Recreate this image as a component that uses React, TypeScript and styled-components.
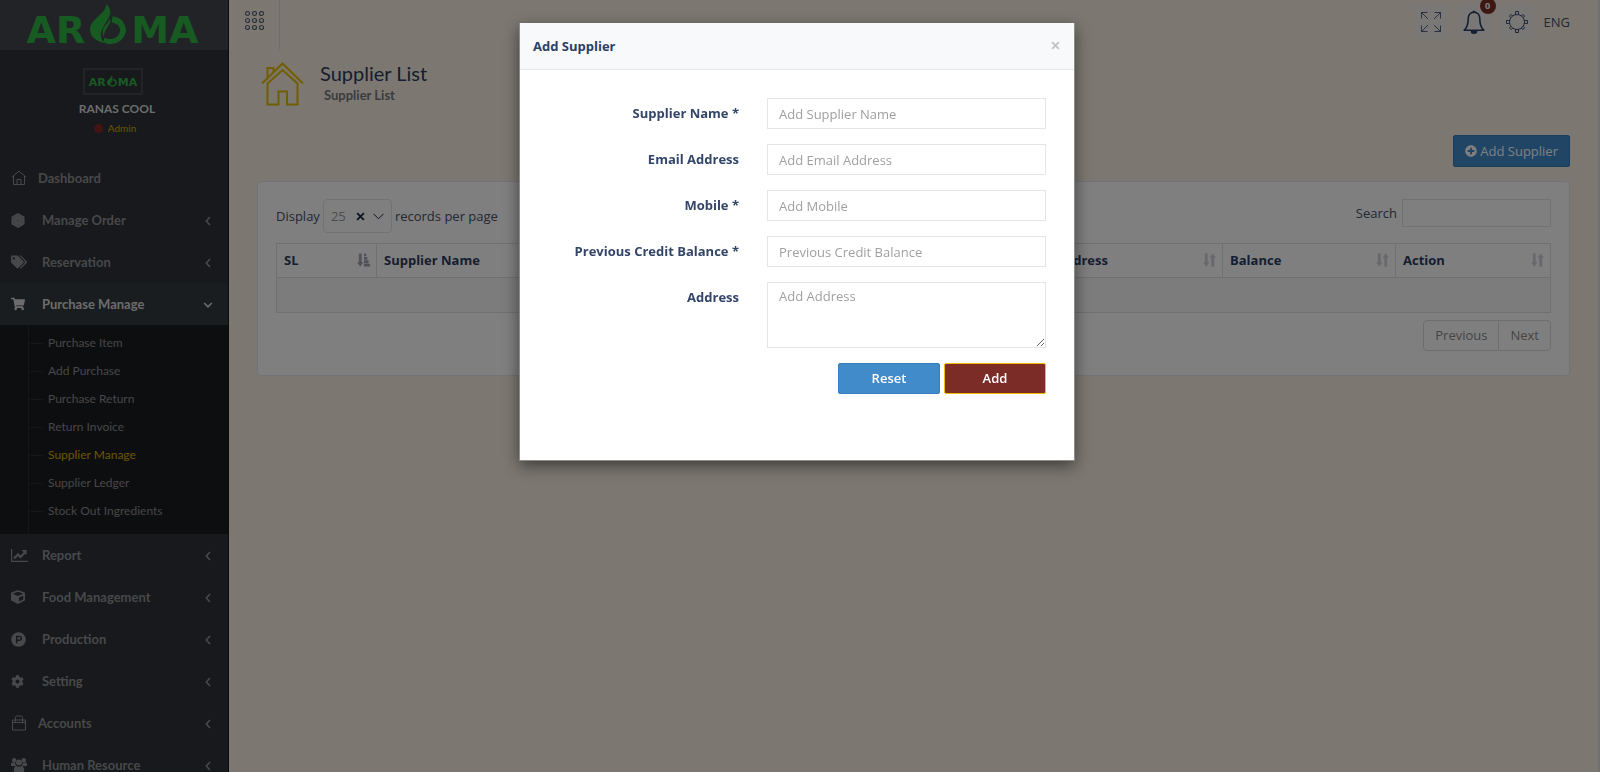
import React from "react";
import styled, { createGlobalStyle } from "styled-components";
import { FaTags, FaShoppingCart, FaCube, FaProductHunt, FaCog, FaPlusCircle } from "react-icons/fa";

const GlobalStyle = createGlobalStyle`
  *, *::before, *::after { box-sizing: border-box; }
  body {
    margin: 0;
    background: #f9f0e2;
    color: #444f68;
    font-family: "Open Sans", "Noto Sans", sans-serif;
    font-size: 13px;
    line-height: 20px;
  }
  button, input, textarea, select { font: inherit; }
  svg { display: block; flex: none; }
`;

const menuFont = `Lato, "Open Sans", sans-serif`;

const Page = styled.div`
  display: flex;
  height: 100vh;
  overflow: hidden;
`;

const Sidebar = styled.aside`
  flex: none;
  width: 229px;
  overflow: hidden;
  background: #2f3238;
  border-right: 1px solid #14161a;
  font-family: ${menuFont};
`;

const LogoBar = styled.div`
  display: flex;
  justify-content: center;
  height: 50px;
  padding: 3px 3px 0 0;
  background: #42474f;
`;

const Logo = styled.div<{ $size: number }>`
  display: flex;
  align-items: flex-end;
  gap: ${(p) => (p.$size > 20 ? 5 : 1)}px;
  height: ${(p) => Math.round(p.$size * 1.08)}px;
  color: #2fb544;
  font-family: "DejaVu Sans", sans-serif;
  font-weight: 700;
  font-size: ${(p) => p.$size}px;
  line-height: 0.72;
`;

const Profile = styled.div`
  display: flex;
  flex-direction: column;
  align-items: center;
  height: 107px;
  padding: 18px 2px 0 0;
`;

const Avatar = styled.div`
  display: flex;
  justify-content: center;
  width: 60px;
  height: 27px;
  padding-top: 5px;
  border: 2px solid #44474d;
`;

const UserName = styled.strong`
  margin-top: 4px;
  padding-left: 8px;
  color: #d8d8d8;
  font-size: 12px;
  line-height: 20px;
`;

const Role = styled.span`
  display: flex;
  align-items: center;
  gap: 5px;
  padding-left: 4px;
  color: #d6ab00;
  font-size: 10px;
  line-height: 18px;
`;

const Dot = styled.i`
  width: 9px;
  height: 9px;
  border-radius: 50%;
  background: #842b28;
`;

const MenuLink = styled.a<{ $active?: boolean; $narrow?: boolean }>`
  display: flex;
  align-items: center;
  gap: ${(p) => (p.$narrow ? 11 : 15)}px;
  height: 42px;
  padding: 0 15px 0 11px;
  background: ${(p) => (p.$active ? "#343b40" : "transparent")};
  color: ${(p) => (p.$active ? "#d8d8d8" : "#8e9194")};
  font-size: 13px;
  font-weight: 700;
  text-decoration: none;
`;

const MenuIcon = styled.span`
  display: flex;
  flex: none;
  width: 16px;
`;

const MenuLabel = styled.span`
  flex: 1;
`;

const SubMenu = styled.ul`
  margin: 0;
  padding: 4px 0 9px 28px;
  list-style: none;
  background: linear-gradient(#2c2e32, #2c2e32) 28px 0 / 1px 100% no-repeat #1b1d20;
`;

const SubLink = styled.a<{ $active?: boolean }>`
  display: flex;
  align-items: center;
  gap: 5px;
  height: 28px;
  padding-left: 2px;
  color: ${(p) => (p.$active ? "#d6ab00" : "#8c8e91")};
  font-size: 12px;
  text-decoration: none;

  &::before {
    content: "";
    width: 13px;
    height: 1px;
    background: #2c2e32;
  }
`;

const Main = styled.main`
  flex: 1;
  min-width: 0;
  border-right: 2px solid #dfe1e4;
`;

const TopBar = styled.header`
  display: flex;
  justify-content: space-between;
  height: 50px;
  padding-right: 28px;
`;

const MenuToggle = styled.button`
  display: flex;
  width: 51px;
  height: 50px;
  padding: 11px 0 0 16px;
  border: 0;
  border-right: 1px solid #e1dfda;
  background: none;
  color: #566076;
`;

const Tools = styled.div`
  display: flex;
  align-items: flex-start;
  gap: 10px;
  padding-top: 5px;
`;

const ToolButton = styled.button`
  position: relative;
  display: flex;
  align-items: center;
  justify-content: center;
  width: 33px;
  height: 34px;
  padding: 0;
  border: 0;
  background: #f3f1ef;
  color: #2b4066;
`;

const Badge = styled.span`
  position: absolute;
  top: -7px;
  right: -5px;
  width: 16px;
  height: 16px;
  border-radius: 50%;
  background: #7c2c27;
  color: #fff;
  font-size: 9px;
  font-weight: 700;
  line-height: 16px;
  text-align: center;
`;

const Language = styled.span`
  line-height: 34px;
`;

const PageTitle = styled.section`
  display: flex;
  gap: 16px;
  height: 85px;
  padding: 12px 0 0 32px;
`;

const Heading = styled.h1`
  margin: 0;
  color: #2b3c63;
  font-family: ${menuFont};
  font-size: 20px;
  font-weight: 400;
  line-height: 22px;
`;

const SubHeading = styled.small`
  display: block;
  padding-left: 4px;
  color: #77777a;
  font-family: ${menuFont};
  font-size: 13px;
  font-weight: 700;
  line-height: 22px;
`;

const Content = styled.section`
  display: flex;
  flex-direction: column;
  align-items: flex-end;
  gap: 14px;
  padding: 0 28px;
`;

const Button = styled.button<{ $danger?: boolean; $width?: number }>`
  display: flex;
  align-items: center;
  justify-content: center;
  gap: 3px;
  width: ${(p) => (p.$width ? `${p.$width}px` : "auto")};
  height: ${(p) => (p.$width ? 31 : 32)}px;
  padding: 0 11px 1px;
  border: 1px solid ${(p) => (p.$danger ? "#f0bd00" : "#357ebd")};
  border-radius: 2px;
  background: ${(p) => (p.$danger ? "#7c2c27" : "#428bca")};
  color: #fff;
  font-weight: ${(p) => (p.$width ? 600 : 400)};
`;

const Card = styled.div`
  width: 100%;
  padding: 17px 18px 24px;
  border: 1px solid #e1e6ef;
  border-radius: 4px;
  background: #fff;
`;

const Controls = styled.div`
  display: flex;
  align-items: flex-start;
  justify-content: space-between;
  height: 44px;
`;

const PerPage = styled.label`
  display: flex;
  align-items: center;
  gap: 3px;
  height: 34px;
`;

const SelectWrap = styled.span`
  position: relative;
  display: flex;
`;

const Select = styled.select`
  width: 69px;
  height: 34px;
  padding: 0 7px;
  appearance: none;
  border: 1px solid #e4e5e7;
  border-radius: 4px;
  background: #fff;
  color: #9a9a9a;
`;

const SelectMarks = styled.span`
  position: absolute;
  top: 0;
  right: 8px;
  bottom: 0;
  display: flex;
  align-items: center;
  gap: 8px;
  color: #1c2742;
  pointer-events: none;
`;

const SearchLabel = styled.label`
  display: flex;
  align-items: center;
  gap: 5px;
  height: 28px;
`;

const SearchInput = styled.input`
  width: 149px;
  height: 28px;
  border: 1px solid #e4e5e7;
  background: #fff;
`;

const Table = styled.table`
  width: 100%;
  table-layout: fixed;
  border-collapse: collapse;

  th, td { border: 1px solid #e0e0e2; }
  th { height: 34px; padding: 0 6px 2px 7px; color: #2b3c63; text-align: left; }
  td { height: 35px; background: #f9f9f9; }
`;

const HeadCell = styled.div`
  display: flex;
  align-items: center;
  justify-content: space-between;
`;

const Pager = styled.nav`
  display: flex;
  justify-content: flex-end;
  margin-top: 7px;
`;

const PageButton = styled.button`
  height: 31px;
  padding: 0 11px 2px;
  border: 1px solid #dcdcde;
  background: #fff;
  color: #8a8a8a;

  &:first-child { border-radius: 4px 0 0 4px; }
  &:last-child { margin-left: -1px; border-radius: 0 4px 4px 0; }
`;

const Backdrop = styled.div`
  position: fixed;
  inset: 0;
  display: flex;
  align-items: flex-start;
  justify-content: center;
  padding: 23px 6px 0 0;
  background: rgba(0, 0, 0, 0.5);
`;

const Dialog = styled.div`
  width: 556px;
  max-width: 100%;
  padding-bottom: 66px;
  border: 1px solid #8f8d88;
  border-top: 0;
  background: #fff;
  box-shadow: 0 5px 15px rgba(0, 0, 0, 0.5);
`;

const DialogHeader = styled.header`
  display: flex;
  align-items: center;
  justify-content: space-between;
  height: 47px;
  padding: 0 12px 1px 13px;
  border-bottom: 1px solid #e1e6ef;
  background: #f7f9fa;
`;

const DialogTitle = styled.h4`
  margin: 0;
  color: #2f4064;
  font-size: 13px;
  font-weight: 700;
`;

const CloseButton = styled.button`
  display: flex;
  padding: 2px;
  border: 0;
  background: none;
  color: #c4c5c6;
`;

const Form = styled.form`
  display: flex;
  flex-direction: column;
  gap: 15px;
  padding: 28px 28px 0;
`;

const Row = styled.div`
  display: grid;
  grid-template-columns: 1fr 279px;
  gap: 28px;
`;

const Label = styled.label`
  color: #34456a;
  font-weight: 700;
  line-height: 30px;
  text-align: right;
`;

const Field = styled.input`
  width: 100%;
  height: 31px;
  padding: 0 11px;
  border: 1px solid #e4e5e7;
  border-radius: 0;
  background: #fff;
  &::placeholder { color: #a0a0a0; opacity: 1; }
`;

const Area = styled(Field)`
  height: 66px;
  padding: 3px 11px;
  resize: vertical;
`;

const Actions = styled.div`
  display: flex;
  justify-content: flex-end;
  gap: 4px;
`;

const Flame = ({ size }: { size: number }) => (
  <svg width={Math.round(size * 0.95)} height={Math.round(size * 1.06)} viewBox="0 0 35 39" fill="currentColor" aria-hidden="true">
    <path d="M16 0C22 7 20 11 16 17C13 22 11 25 10.500 29C10.500 33 12 36 14 38C5 36 0 31 0 25C0 14 15 11 16 0Z" />
    <path d="M19 11C21 17 14 20 12.500 25C12 28 12.500 30 13 32C14 27 16 24 18 21C20 18 20 15 19 11Z" />
    <path d="M22 12C31 13 35 20 35 26C34 34 27 39 20 39C17 39 15 38 13 37L14 33C21 36 28 33 29 27C30 22 27 19 21 18Z" />
  </svg>
);

const Brand = ({ size }: { size: number }) => (
  <Logo $size={size}>
    <span>AR</span>
    <Flame size={size} />
    <span>MA</span>
  </Logo>
);

const HomeLine = () => (
  <svg width="16" height="16" viewBox="0 0 16 16" fill="none" stroke="currentColor" aria-hidden="true">
    <path d="M1 7 8 1.2 15 7M2.5 6v8.5h11V6M6 14.5v-5h4v5" />
  </svg>
);

const Hexagon = () => (
  <svg width="14" height="15" viewBox="0 0 14 15" aria-hidden="true">
    <path d="M7 0 13.5 3.7v7.6L7 15 .5 11.3V3.7Z" fill="currentColor" />
    <path d="M7 2 11.5 5v5L7 13 2.5 10V5ZM7 2v11M2.5 5l9 5M11.5 5l-9 5" fill="none" stroke="#2f3238" strokeOpacity=".25" strokeWidth=".7" />
  </svg>
);

const LineChart = () => (
  <svg width="17" height="13" viewBox="0 0 17 13" fill="none" stroke="currentColor" aria-hidden="true">
    <path d="M.6 0v12.4H17" strokeWidth="1.2" />
    <path d="m3 9.500 4-4L9.500 8 14 3.500" strokeWidth="2.2" />
    <path d="M10.500 1h5v5Z" fill="currentColor" stroke="none" />
  </svg>
);

const People = () => (
  <svg width="16" height="15" viewBox="0 0 16 15" fill="currentColor" aria-hidden="true">
    <circle cx="3.2" cy="2.2" r="2.200" />
    <circle cx="12.8" cy="2.2" r="2.200" />
    <circle cx="8" cy="4.600" r="3" />
    <path d="M0 8V6c0-1 .6-1.500 1.500-1.500h2.700C4.200 6 4.600 7 5.300 8ZM16 8V6c0-1-.6-1.500-1.500-1.500h-2.700c0 1.500-.4 2.500-1.100 3.500ZM2.800 13c0-3 .8-5 2.800-5 1.500 1 3.300 1 4.800 0 2 0 2.800 2 2.800 5 0 1.300-.8 2-2 2H4.800c-1.200 0-2-.7-2-2Z" />
  </svg>
);

const Bag = () => (
  <svg width="16" height="16" viewBox="0 0 16 16" fill="none" stroke="currentColor" aria-hidden="true">
    <path d="M1.5 5h13v10h-13ZM1.5 7.5h13M4.5 7.5V2.8C4.5 1.5 5 1 6 1h4c1 0 1.5.5 1.5 1.8v4.7" />
  </svg>
);

const Angle = ({ down }: { down?: boolean }) => (
  <svg width="10" height="12" viewBox="0 0 10 12" fill="none" stroke="currentColor" strokeWidth="1.6" aria-hidden="true">
    <path d={down ? "M1.2 5 5 8.8 8.8 5" : "M7 3 3.3 7 7 11"} />
  </svg>
);

const DotsGrid = () => (
  <svg width="19" height="19" viewBox="0 0 19 19" fill="none" stroke="currentColor" strokeWidth="1.2" aria-hidden="true">
    {[2.5, 9.5, 16.5].flatMap((x) => [2.5, 9.5, 16.5].map((y) => <circle key={`${x}-${y}`} cx={x} cy={y} r="2" />))}
  </svg>
);

const BigHouse = () => (
  <svg width="43" height="44" viewBox="0 0 43 44" fill="none" stroke="#e2bd00" strokeWidth="2" aria-hidden="true">
    <path d="M1 21.5 21.5 1.5 42 21.5M6.5 16V6H12.5v4M6.5 21.5 21.5 8 36.5 21.5V42.5H26V29.5H17.5V42.5H6.5Z" />
  </svg>
);

const Expand = () => (
  <svg width="20" height="20" viewBox="0 0 20 20" fill="none" stroke="currentColor" strokeWidth=".8" aria-hidden="true">
    <path d="M.5 6.5V.5h6M.5.5l6.500 6.500M13.5.5h6v6M19.5.5l-6.500 6.500M.5 13.5v6h6M.5 19.5l6.500-6.500M19.5 13.5v6h-6M19.5 19.5l-6.500-6.500" />
  </svg>
);

const Bell = () => (
  <svg width="22" height="24" viewBox="0 0 22 24" fill="none" stroke="currentColor" strokeWidth="1.6" strokeLinejoin="round" aria-hidden="true">
    <path d="M11 2.2C7 2.2 5.2 5.5 5.2 9c0 6-1 8.5-4 11.2h19.6C17.8 17.5 16.8 15 16.8 9c0-3.5-1.8-6.8-5.8-6.8Z" />
    <path d="M9.5 2a1.500 1.500 0 0 1 3 0ZM7.5 20.5a3.500 3.500 0 0 0 7 0Z" fill="currentColor" stroke="none" />
  </svg>
);

const Gear = () => (
  <svg width="22" height="22" viewBox="0 0 22 22" fill="none" stroke="currentColor" strokeWidth=".9" aria-hidden="true">
    <circle cx="11" cy="11" r="7.5" />
    {[0, 90, 180, 270].map((a) => (
      <path key={a} d="M9.5 3.700V.5h3v3.200" transform={`rotate(${a} 11 11)`} />
    ))}
    {[45, 135, 225, 315].map((a) => (
      <path key={a} d="M9.800 3.600V1.5h2.400v2.100" transform={`rotate(${a} 11 11)`} />
    ))}
  </svg>
);

const Cross = ({ size, width }: { size: number; width: number }) => (
  <svg width={size} height={size} viewBox="0 0 8 8" fill="none" stroke="currentColor" strokeWidth={width} aria-hidden="true">
    <path d="m1 1 6 6M7 1 1 7" />
  </svg>
);

const SortIcon = ({ active }: { active?: boolean }) => (
  <svg width="13" height="14" viewBox="0 0 14 14" fill={active ? "#a0a5b2" : "#cfd0d6"} aria-hidden="true">
    <path d="M2 0h3v9.500h2L3.500 14 0 9.500h2Z" />
    {active ? <path d="M7.500 0h2.500v3h-2.500ZM7.500 3.700h3.700v3H7.500ZM7.500 7.400h5v3H7.500ZM7.500 11.100h6.500v2.900h-6.500Z" /> : <path d="M9 14h3V4.500h2L10.500 0 7 4.500h2Z" />}
  </svg>
);

type Item = { label: string; icon: React.ReactNode; narrow?: boolean; leaf?: boolean; children?: string[] };

const items: Item[] = [
  { label: "Dashboard", icon: <HomeLine />, narrow: true, leaf: true },
  { label: "Manage Order", icon: <Hexagon /> },
  { label: "Reservation", icon: <FaTags size={16} /> },
  {
    label: "Purchase Manage",
    icon: <FaShoppingCart size={14} />,
    children: ["Purchase Item", "Add Purchase", "Purchase Return", "Return Invoice", "Supplier Manage", "Supplier Ledger", "Stock Out Ingredients"],
  },
  { label: "Report", icon: <LineChart /> },
  { label: "Food Management", icon: <FaCube size={14} /> },
  { label: "Production", icon: <FaProductHunt size={15} /> },
  { label: "Setting", icon: <FaCog size={13} /> },
  { label: "Accounts", icon: <Bag />, narrow: true },
  { label: "Human Resource", icon: <People /> },
];

const columns = [
  { label: "SL", width: "100px" },
  { label: "Supplier Name", width: "28%" },
  { label: "Email", width: "15%" },
  { label: "Mobile", width: "auto" },
  { label: "Address", width: "174px" },
  { label: "Balance", width: "173px" },
  { label: "Action", width: "155px" },
];

const fields = [
  { id: "name", label: "Supplier Name *", hint: "Add Supplier Name", type: "text" },
  { id: "email", label: "Email Address", hint: "Add Email Address", type: "email" },
  { id: "mobile", label: "Mobile *", hint: "Add Mobile", type: "tel" },
  { id: "balance", label: "Previous Credit Balance *", hint: "Previous Credit Balance", type: "text" },
];

export default function App() {
  return (
    <>
      <GlobalStyle />
      <Page>
        <Sidebar>
          <LogoBar>
            <Brand size={38} />
          </LogoBar>
          <Profile>
            <Avatar>
              <Brand size={11} />
            </Avatar>
            <UserName>RANAS COOL</UserName>
            <Role>
              <Dot />
              Admin
            </Role>
          </Profile>
          <nav>
            {items.map((item) => (
              <React.Fragment key={item.label}>
                <MenuLink href="#" $active={!!item.children} $narrow={item.narrow}>
                  <MenuIcon>{item.icon}</MenuIcon>
                  <MenuLabel>{item.label}</MenuLabel>
                  {!item.leaf && <Angle down={!!item.children} />}
                </MenuLink>
                {item.children && (
                  <SubMenu>
                    {item.children.map((child) => (
                      <li key={child}>
                        <SubLink href="#" $active={child === "Supplier Manage"}>
                          {child}
                        </SubLink>
                      </li>
                    ))}
                  </SubMenu>
                )}
              </React.Fragment>
            ))}
          </nav>
        </Sidebar>
        <Main>
          <TopBar>
            <MenuToggle aria-label="Toggle menu">
              <DotsGrid />
            </MenuToggle>
            <Tools>
              <ToolButton aria-label="Full screen">
                <Expand />
              </ToolButton>
              <ToolButton aria-label="Notifications">
                <Bell />
                <Badge>0</Badge>
              </ToolButton>
              <ToolButton aria-label="Settings">
                <Gear />
              </ToolButton>
              <Language>ENG</Language>
            </Tools>
          </TopBar>
          <PageTitle>
            <BigHouse />
            <div>
              <Heading>Supplier List</Heading>
              <SubHeading>Supplier List</SubHeading>
            </div>
          </PageTitle>
          <Content>
            <Button>
              <FaPlusCircle size={12} />
              Add Supplier
            </Button>
            <Card>
              <Controls>
                <PerPage>
                  Display
                  <SelectWrap>
                    <Select defaultValue="25">
                      <option>25</option>
                      <option>50</option>
                    </Select>
                    <SelectMarks>
                      <Cross size={9} width={1.6} />
                      <svg width="11" height="7" viewBox="0 0 11 7" fill="none" stroke="currentColor" aria-hidden="true">
                        <path d="m.5.8 5 5 5-5" />
                      </svg>
                    </SelectMarks>
                  </SelectWrap>
                  records per page
                </PerPage>
                <SearchLabel>
                  Search
                  <SearchInput type="search" />
                </SearchLabel>
              </Controls>
              <Table>
                <colgroup>
                  {columns.map((c) => (
                    <col key={c.label} width={c.width} />
                  ))}
                </colgroup>
                <thead>
                  <tr>
                    {columns.map((c, i) => (
                      <th key={c.label} scope="col">
                        <HeadCell>
                          {c.label}
                          <SortIcon active={i === 0} />
                        </HeadCell>
                      </th>
                    ))}
                  </tr>
                </thead>
                <tbody>
                  <tr>
                    <td colSpan={columns.length} />
                  </tr>
                </tbody>
              </Table>
              <Pager>
                <PageButton>Previous</PageButton>
                <PageButton>Next</PageButton>
              </Pager>
            </Card>
          </Content>
        </Main>
      </Page>
      <Backdrop>
        <Dialog role="dialog" aria-labelledby="dialog-title">
          <DialogHeader>
            <DialogTitle id="dialog-title">Add Supplier</DialogTitle>
            <CloseButton aria-label="Close">
              <Cross size={9} width={1.8} />
            </CloseButton>
          </DialogHeader>
          <Form>
            {fields.map((f) => (
              <Row key={f.id}>
                <Label htmlFor={f.id}>{f.label}</Label>
                <Field id={f.id} type={f.type} placeholder={f.hint} />
              </Row>
            ))}
            <Row>
              <Label htmlFor="address">Address</Label>
              <Area as="textarea" id="address" placeholder="Add Address" />
            </Row>
            <Actions>
              <Button type="reset" $width={102}>
                Reset
              </Button>
              <Button type="submit" $danger $width={102}>
                Add
              </Button>
            </Actions>
          </Form>
        </Dialog>
      </Backdrop>
    </>
  );
}
